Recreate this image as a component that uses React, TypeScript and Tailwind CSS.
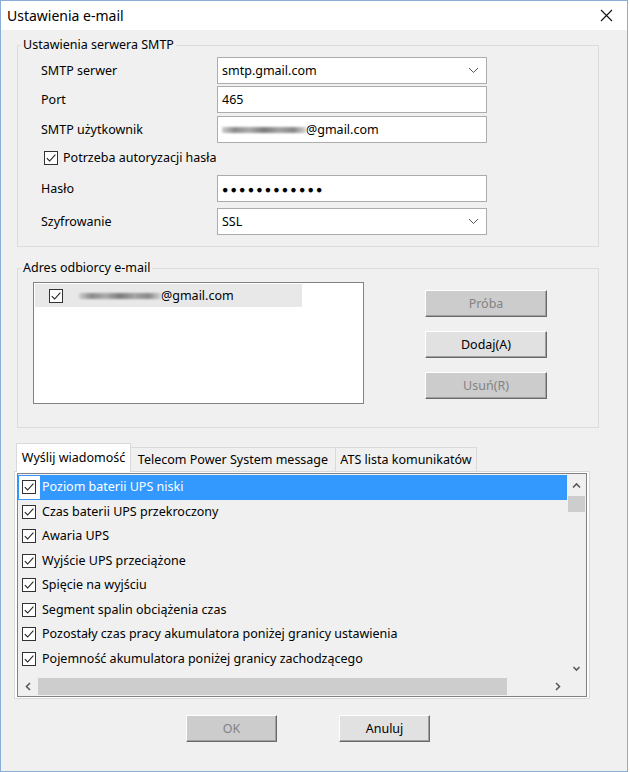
import React from "react";

const events = [
  "Poziom baterii UPS niski",
  "Czas baterii UPS przekroczony",
  "Awaria UPS",
  "Wyjście UPS przeciążone",
  "Spięcie na wyjściu",
  "Segment spalin obciążenia czas",
  "Pozostały czas pracy akumulatora poniżej granicy ustawienia",
  "Pojemność akumulatora poniżej granicy zachodzącego",
];

function CheckBox() {
  return (
    <span className="inline-flex h-[14px] w-[14px] shrink-0 items-center justify-center border border-[#333333] bg-white">
      <svg width="12" height="12" viewBox="0 0 12 12">
        <path d="M1.8 6.2 4.6 9 10.4 2.6" fill="none" stroke="#222222" strokeWidth="1.1" />
      </svg>
    </span>
  );
}

function Chevron() {
  return (
    <svg width="11" height="7" viewBox="0 0 11 7" className="mr-[7px] shrink-0">
      <path d="M1 1l4.5 4.5L10 1" fill="none" stroke="#555555" strokeWidth="1" />
    </svg>
  );
}

// masked-out part of the address
function Smudge({ w }: { w: number }) {
  return (
    <span
      className="h-[6px] shrink-0 bg-[linear-gradient(90deg,#d0d0d0,#8a8a8a_15%,#ababab_32%,#7c7c7c_50%,#a3a3a3_68%,#888888_85%,#d4d4d4)] blur-[1.3px]"
      style={{ width: w }}
    />
  );
}

function Button({ label, disabled, w }: { label: string; disabled?: boolean; w: string }) {
  return (
    <div
      className={`${w} flex h-[27px] items-center justify-center border border-t-white border-l-white border-r-[#696969] border-b-[#696969] shadow-[inset_-1px_-1px_0_#a0a0a0] ${
        disabled ? "bg-[#cccccc] text-[#838383]" : "bg-[#e1e1e1] text-black"
      }`}
    >
      {label}
    </div>
  );
}

function Arrow({ d }: { d: string }) {
  return (
    <svg width="9" height="9" viewBox="0 0 9 9">
      <path d={d} fill="none" stroke="#5a5a5a" strokeWidth="1.6" />
    </svg>
  );
}

export default function App() {
  const label = "w-[176px] shrink-0";
  const field = "flex h-[27px] w-[270px] items-center border border-[#acacac] bg-white pl-[4px]";

  return (
    <div className="h-[772px] w-[630px] bg-white">
      <div className="flex h-[772px] w-[628px] flex-col border border-[#8aaed8] bg-[#f0f0f0] text-[12.5px] leading-[18px] text-black font-['Noto_Sans',sans-serif]">
        {/* title bar */}
        <div className="flex h-[29px] shrink-0 items-center justify-between bg-white pl-[6px] pr-[14px] text-[14px]">
          <span>Ustawienia e-mail</span>
          <svg width="13" height="13" viewBox="0 0 13 13">
            <path d="M1 1l11 11M12 1 1 12" stroke="#111111" strokeWidth="1.1" />
          </svg>
        </div>

        <div className="flex flex-col pl-[13px]">
          {/* SMTP server */}
          <fieldset className="ml-[3px] mt-[6px] w-[582px] border border-[#dcdcdc] pb-[11px]">
            <legend className="ml-[3px] px-[2px]">Ustawienia serwera SMTP</legend>
            <div className="flex flex-col pl-[23px]">
              <div className="mt-[3px] flex items-center">
                <span className={label}>SMTP serwer</span>
                <div className={`${field} justify-between`}>
                  <span>smtp.gmail.com</span>
                  <Chevron />
                </div>
              </div>
              <div className="mt-[2px] flex items-center">
                <span className={label}>Port</span>
                <div className={field}>465</div>
              </div>
              <div className="mt-[3px] flex items-center">
                <span className={label}>SMTP użytkownik</span>
                <div className={`${field} pl-0`}>
                  <Smudge w={84} />
                  <span>@gmail.com</span>
                </div>
              </div>
              <div className="mt-[5px] flex h-[20px] items-center pl-[3px]">
                <CheckBox />
                <span className="ml-[5px]">Potrzeba autoryzacji hasła</span>
              </div>
              <div className="mt-[7px] flex items-center">
                <span className={label}>Hasło</span>
                <div className={field}>
                  <span className="text-[10.5px] tracking-[2.2px]">●●●●●●●●●●●●</span>
                </div>
              </div>
              <div className="mt-[6px] flex items-center">
                <span className={label}>Szyfrowanie</span>
                <div className={`${field} justify-between bg-[#e5e5e5]`}>
                  <span>SSL</span>
                  <Chevron />
                </div>
              </div>
            </div>
          </fieldset>

          {/* recipients */}
          <fieldset className="ml-[3px] mt-[12px] w-[582px] border border-[#dcdcdc] pb-[23px]">
            <legend className="ml-[3px] px-[2px]">Adres odbiorcy e-mail</legend>
            <div className="mt-[5px] flex">
              <div className="ml-[15px] h-[122px] w-[331px] border border-[#828282] bg-white p-[1px]">
                <div className="flex h-[23px] w-[267px] items-center bg-[#e8e8e8] pl-[14px]">
                  <CheckBox />
                  <span className="ml-[16px] flex items-center">
                    <Smudge w={82} />
                    <span>@gmail.com</span>
                  </span>
                </div>
              </div>
              <div className="ml-[61px] mt-[8px] flex flex-col gap-[14px]">
                <Button label="Próba" disabled w="w-[122px]" />
                <Button label="Dodaj(A)" w="w-[122px]" />
                <Button label="Usuń(R)" disabled w="w-[122px]" />
              </div>
            </div>
          </fieldset>

          {/* message tabs */}
          <div className="ml-[2px] mt-[15px] flex h-[28px] items-end">
            <div className="relative z-10 -mb-[1px] flex h-[29px] w-[115px] items-center justify-center border border-b-0 border-[#d9d9d9] bg-white">
              Wyślij wiadomość
            </div>
            <div className="flex h-[24px] w-[205px] items-center justify-center border border-b-0 border-l-0 border-[#d9d9d9] bg-[#f0f0f0]">
              Telecom Power System message
            </div>
            <div className="flex h-[24px] w-[141px] items-center justify-center border border-b-0 border-l-0 border-[#d9d9d9] bg-[#f0f0f0]">
              ATS lista komunikatów
            </div>
          </div>
          <div className="w-[576px] border border-[#d9d9d9] bg-white px-[2px] py-[1px]">
            <div className="flex h-[224px] flex-col border border-[#828282] bg-[#f0f0f0]">
              <div className="flex h-[203px]">
                <div className="flex flex-1 flex-col pt-[1px]">
                  {events.map((text, i) => (
                    <div
                      key={text}
                      className={`flex h-[24.5px] items-center ${i === 0 ? "bg-[#3399ff] text-white" : ""}`}
                    >
                      <span
                        className={`ml-[1px] flex h-[22.5px] w-[21px] items-center pl-[3px] ${i === 0 ? "bg-white" : ""}`}
                      >
                        <CheckBox />
                      </span>
                      <span className="ml-[2px] whitespace-nowrap">{text}</span>
                    </div>
                  ))}
                </div>
                <div className="flex w-[19px] flex-col bg-[#f0f0f0]">
                  <div className="flex h-[22px] items-center justify-center">
                    <Arrow d="M1 6.5 4.5 3 8 6.5" />
                  </div>
                  <div className="mx-[1px] h-[16px] bg-[#cdcdcd]" />
                  <div className="flex-1" />
                  <div className="flex h-[18px] items-center justify-center">
                    <Arrow d="M1.5 3 4.5 6 7.5 3" />
                  </div>
                </div>
              </div>
              <div className="flex h-[19px]">
                <div className="flex w-[20px] items-center justify-center">
                  <Arrow d="M6 1 2.5 4.5 6 8" />
                </div>
                <div className="my-[1px] w-[469px] bg-[#cdcdcd]" />
                <div className="flex-1" />
                <div className="flex w-[20px] items-center justify-center">
                  <Arrow d="M3 1 6.5 4.5 3 8" />
                </div>
                <div className="w-[19px] bg-[#f0f0f0]" />
              </div>
            </div>
          </div>

          {/* dialog buttons */}
          <div className="ml-[172px] mt-[16px] flex gap-[62px]">
            <Button label="OK" disabled w="w-[91px]" />
            <Button label="Anuluj" w="w-[91px]" />
          </div>
        </div>
      </div>
    </div>
  );
}
